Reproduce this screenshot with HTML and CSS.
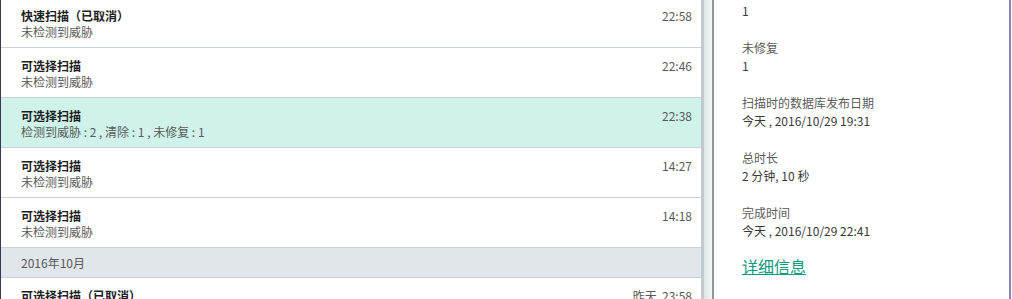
FILE: index.html
```html
<!DOCTYPE html>
<html>
<head lang="zh-CN">
    <meta charset="UTF-8">
    <title>扫描历史</title>
    <link rel="stylesheet" href="styles.css">
</head>
<body>
<div class="app">
    <div class="history">
        <ul class="scan-list">
            <li class="scan">
                <div class="scan-text">
                    <p class="scan-title">快速扫描（已取消）</p>
                    <p class="scan-sub">未检测到威胁</p>
                </div>
                <span class="scan-time">22:58</span>
            </li>
            <li class="scan">
                <div class="scan-text">
                    <p class="scan-title">可选择扫描</p>
                    <p class="scan-sub">未检测到威胁</p>
                </div>
                <span class="scan-time">22:46</span>
            </li>
            <li class="scan current">
                <div class="scan-text">
                    <p class="scan-title">可选择扫描</p>
                    <p class="scan-sub">检测到威胁 : 2 , 清除 : 1 , 未修复 : 1</p>
                </div>
                <span class="scan-time">22:38</span>
            </li>
            <li class="scan">
                <div class="scan-text">
                    <p class="scan-title">可选择扫描</p>
                    <p class="scan-sub">未检测到威胁</p>
                </div>
                <span class="scan-time">14:27</span>
            </li>
            <li class="scan">
                <div class="scan-text">
                    <p class="scan-title">可选择扫描</p>
                    <p class="scan-sub">未检测到威胁</p>
                </div>
                <span class="scan-time">14:18</span>
            </li>
            <li class="month">2016年10月</li>
            <li class="scan">
                <div class="scan-text">
                    <p class="scan-title">可选择扫描（已取消）</p>
                    <p class="scan-sub">未检测到威胁</p>
                </div>
                <span class="scan-time">昨天&nbsp;&nbsp;23:58</span>
            </li>
        </ul>
    </div>
    <div class="splitter"></div>
    <div class="details">
        <dl class="facts">
            <dt>清除</dt>
            <dd>1</dd>
            <dt>未修复</dt>
            <dd>1</dd>
            <dt>扫描时的数据库发布日期</dt>
            <dd>今天 , 2016/10/29 19:31</dd>
            <dt>总时长</dt>
            <dd>2 分钟, 10 秒</dd>
            <dt>完成时间</dt>
            <dd>今天 , 2016/10/29 22:41</dd>
        </dl>
        <a class="more" href="#">详细信息</a>
    </div>
</div>
</body>
</html>
```

FILE: styles.css
```css
* {
    padding: 0;
    margin: 0;
    list-style: none;
    border: 0;
}

body {
    font-family: "Noto Sans CJK SC", sans-serif;
    font-size: 12px;
    color: #333;
    background: #fff;
}

.app {
    display: flex;
    height: 299px;
    overflow: hidden;
    border-left: 1px solid #3b3552;
}

.history {
    width: 700px;
    overflow: hidden;
}

.scan-list {
    margin-top: -2px;
}

.scan {
    display: flex;
    justify-content: space-between;
    padding: 10px 9px 0 20px;
    height: 39px;
    border-bottom: 1px solid #c9d0d7;
}

.scan.current {
    background: #cff2ea;
}

.scan-title {
    line-height: 16px;
    font-weight: bold;
    color: #1e1e1e;
}

.scan-sub {
    line-height: 16px;
    color: #5a5a5a;
}

.scan-time {
    line-height: 16px;
    color: #5a5a5a;
}

.month {
    height: 29px;
    line-height: 29px;
    padding-left: 20px;
    background: #e1e6ea;
    border-bottom: 1px solid #c9d0d7;
    color: #5a5a5a;
}

.splitter {
    width: 8px;
    border-left: 3px solid #c2cacf;
    border-right: 2px solid #8e979c;
    background: linear-gradient(to right, #dde5e5, #f3f7f7);
}

.details {
    flex: 1;
    padding-left: 28px;
    border-right: 2px solid #8a83b6;
    margin-right: 1px;
    overflow: hidden;
}

.facts {
    margin-top: -16px;
}

.facts dt {
    line-height: 18px;
    color: #5a5a5a;
}

.facts dd {
    line-height: 18px;
    margin-bottom: 19px;
    color: #3a3a3a;
}

.more {
    display: inline-block;
    margin-top: -5px;
    font-size: 16px;
    line-height: 20px;
    color: #0f9a7e;
    text-decoration: underline;
}
```
